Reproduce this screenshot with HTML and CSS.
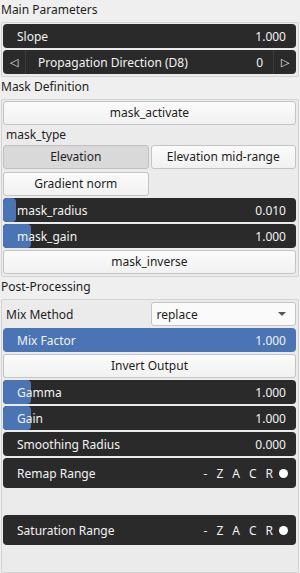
FILE: index.html
```html
<!DOCTYPE html>
<html lang="en">
<head>
  <meta charset="UTF-8">
  <title>Parameters</title>
  <link rel="stylesheet" href="styles.css">
</head>
<body>
  <div class="title">Main Parameters</div>
  <div class="group">
    <div class="slider"><span>Slope</span><span>1.000</span></div>
    <div class="slider stepper">
      <span class="arrow">&#9665;</span>
      <span class="stepLabel">Propagation Direction (D8)</span>
      <span class="stepValue">0</span>
      <span class="arrow">&#9655;</span>
    </div>
  </div>

  <div class="title">Mask Definition</div>
  <div class="group">
    <div class="button">mask_activate</div>
    <div class="label">mask_type</div>
    <div class="choices">
      <div class="button checked">Elevation</div>
      <div class="button">Elevation mid-range</div>
      <div class="button">Gradient norm</div>
    </div>
    <div class="slider"><div class="fill" style="width:13px"></div><span>mask_radius</span><span>0.010</span></div>
    <div class="slider"><div class="fill" style="width:28px"></div><span>mask_gain</span><span>1.000</span></div>
    <div class="button">mask_inverse</div>
  </div>

  <div class="title">Post-Processing</div>
  <div class="group last">
    <div class="combo-row">
      <span class="label">Mix Method</span>
      <div class="combo"><span>replace</span><span class="caret"></span></div>
    </div>
    <div class="slider full"><span>Mix Factor</span><span>1.000</span></div>
    <div class="button">Invert Output</div>
    <div class="slider"><div class="fill" style="width:28px"></div><span>Gamma</span><span>1.000</span></div>
    <div class="slider"><div class="fill" style="width:28px"></div><span>Gain</span><span>1.000</span></div>
    <div class="slider"><span>Smoothing Radius</span><span>0.000</span></div>
    <div class="slider range"><span>Remap Range</span><span class="flags"><b>-</b><b>Z</b><b>A</b><b>C</b><b>R</b><i class="dot"></i></span></div>
    <div class="spacer"></div>
    <div class="slider range"><span>Saturation Range</span><span class="flags"><b>-</b><b>Z</b><b>A</b><b>C</b><b>R</b><i class="dot"></i></span></div>
  </div>
</body>
</html>
```
FILE: styles.css
```css
:root{
  --bg:#efefef;
  --panel:#ebebeb;
  --frame:#d3d3d3;
  --dark:#2a2a2a;
  --blue:#4a74b4;
  --text:#1e1e1e;
}
*{box-sizing:border-box;margin:0}
body{
  font-family:"Noto Sans",sans-serif;font-size:12px;
  background:var(--bg);color:var(--text);
  width:300px;height:573px;overflow:hidden;
}
.title{height:22px;line-height:20px;padding-left:1px}
.group{
  margin:0 1px;border:1px solid var(--frame);border-radius:2px;background:var(--panel);
  padding:1px 2px 2px 1px;display:flex;flex-direction:column;gap:2px;
}
.group.last{height:274px;padding-top:2px}
.slider{
  position:relative;flex-shrink:0;height:24px;border-radius:4px;background:var(--dark);color:#f2f2f2;
  display:flex;justify-content:space-between;align-items:center;padding:0 10px 0 14px;
  overflow:hidden;
}
.slider span{position:relative}
.slider .fill{position:absolute;left:0;top:0;bottom:0;background:var(--blue);border-radius:4px}
.slider.full{background:var(--blue)}
.stepper{padding:0}
.stepper .arrow{flex:0 0 23px;text-align:center;align-self:stretch;line-height:24px;font-size:11px}
.stepper .arrow:first-child{border-right:1px solid #3c3c3c}
.stepper .arrow:last-child{border-left:1px solid #3c3c3c}
.stepLabel{flex:1;padding-left:12px}
.stepValue{padding-right:10px}
.button{
  height:24px;flex-shrink:0;line-height:22px;text-align:center;border:1px solid #c4c4c4;border-radius:3px;
  background:linear-gradient(#fbfbfb,#f1f1f1);
}
.button.checked{background:#d9d9d9;border-color:#c0c0c0}
.group > .label{height:16px;line-height:16px;padding-left:3px}
.choices{display:grid;grid-template-columns:1fr 1fr;gap:3px 2px}
.combo-row{display:grid;grid-template-columns:1fr 1fr;gap:2px;align-items:center;height:24px}
.combo-row .label{padding-left:3px}
.combo{
  height:24px;border:1px solid #c4c4c4;border-radius:3px;background:#fafafa;
  display:flex;justify-content:space-between;align-items:center;padding:0 9px 0 5px;
}
.caret{width:0;height:0;border-left:4px solid transparent;border-right:4px solid transparent;border-top:4px solid #555}
.range{height:30px}
.flags{display:flex;align-items:center;gap:9px;margin-right:-2px}
.flags b{font-weight:normal}
.dot{display:inline-block;width:9px;height:9px;border-radius:50%;background:#fff;margin-left:-3px}
.spacer{height:23px;flex-shrink:0}
```
